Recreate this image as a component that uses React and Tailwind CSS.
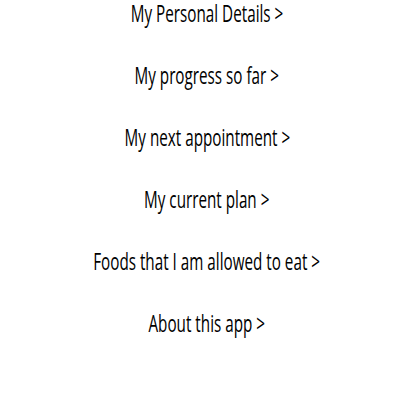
const items = [
  'My Personal Details >',
  'My progress so far >',
  'My next appointment >',
  'My current plan >',
  'Foods that I am allowed to eat >',
  'About this app >',
]

export default function App() {
  return (
    <main className="h-[400px] w-[400px] overflow-hidden bg-white pl-[14px] text-black" style={{ fontFamily: '"Open Sans", sans-serif' }}>
      <ul className="flex flex-col">
        {items.map((label) => (
          <li key={label} className="flex h-[62px] items-start justify-center">
            <span className="inline-block origin-center scale-x-[0.635] whitespace-nowrap text-[24px] font-medium leading-[26px]">{label}</span>
          </li>
        ))}
      </ul>
    </main>
  )
}
